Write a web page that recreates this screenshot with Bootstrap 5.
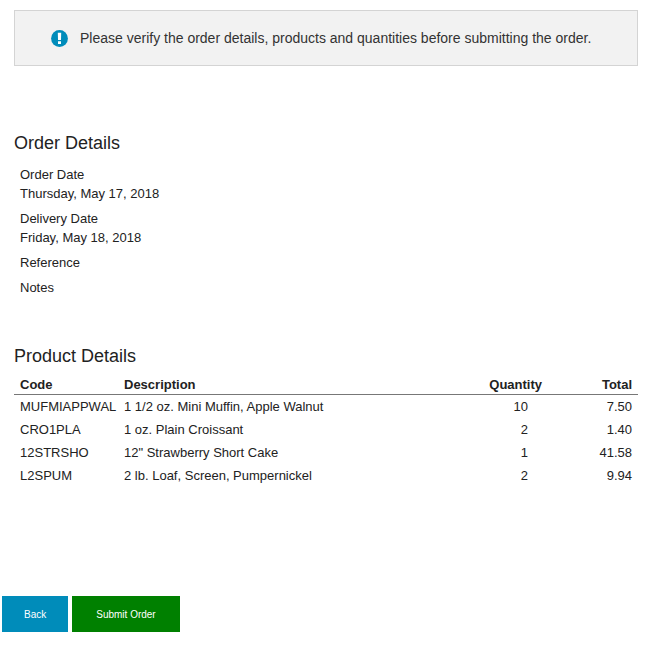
<!DOCTYPE html>
<html lang="en">
<head>
<meta charset="utf-8">
<meta name="viewport" content="width=device-width, initial-scale=1">
<title>Verify Order</title>
<link href="https://cdn.jsdelivr.net/npm/bootstrap@5.3.0/dist/css/bootstrap.min.css" rel="stylesheet">
<style>
body { font-family: "Liberation Sans", Arial, sans-serif; font-size: 13px; line-height: 19px; color: #222; background: #fff; }
.page-body { padding: 10px 9px 0 14px; }
.notice { background: #f2f2f2; border: 1px solid #d4d4d4; padding: 17px 36px; font-size: 14px; line-height: 20px; gap: 12px; color: #333; }
.notice svg { width: 17px; height: 17px; }
.section-title { font-size: 18px; line-height: 24px; color: #222; }
.order-section { margin-top: 65px; }
.product-section { margin-top: 47px; }
.order-facts { padding: 10px 6px 0; }
.order-facts > div { margin-bottom: 6px; }
.product-table { color: #222; line-height: 19px; margin-top: 5px; }
.product-table th, .product-table td { padding: 2px 6px; }
.product-table thead th { padding-bottom: 0; }
.product-table tr > :first-child { padding-right: 0; }
.product-table thead tr { border-bottom: 1px solid #777; }
.product-table .col-code { width: 104px; }
.product-table .col-qty { width: 100px; }
.product-table .col-total { width: 90px; }
.product-table td.qty-cell { padding-right: 20px; }
.actions { margin-top: 109px; padding: 0 2px; }
.action-btn { border: 0; border-radius: 0; height: 36px; padding: 0 22px; font-size: 10px; color: #fff; }
.back-btn, .back-btn:hover { background: #008cba; color: #fff; }
.submit-btn, .submit-btn:hover { background: #008000; color: #fff; padding: 0 24px; }
</style>
<script src="https://cdn.jsdelivr.net/npm/bootstrap@5.3.0/dist/js/bootstrap.bundle.min.js"></script>
</head>
<body>
<main class="page-body">
  <div class="notice d-flex align-items-center" role="alert">
    <svg class="flex-shrink-0" viewBox="0 0 17 17" aria-hidden="true"><circle cx="8.5" cy="8.5" r="8.4" fill="#008cba"/><path d="M6.8 2.8h3.4L10 10H7zM7 11.2h3v2.8H7z" fill="#fff"/></svg>
    <span>Please verify the order details, products and quantities before submitting the order.</span>
  </div>
  <section class="order-section">
    <h2 class="section-title m-0">Order Details</h2>
    <dl class="order-facts m-0">
      <div><dt class="fw-normal">Order Date</dt><dd class="m-0">Thursday, May 17, 2018</dd></div>
      <div><dt class="fw-normal">Delivery Date</dt><dd class="m-0">Friday, May 18, 2018</dd></div>
      <div><dt class="fw-normal">Reference</dt></div>
      <div><dt class="fw-normal">Notes</dt></div>
    </dl>
  </section>
  <section class="product-section">
    <h2 class="section-title m-0">Product Details</h2>
    <table class="product-table table-borderless w-100">
      <thead><tr><th class="col-code">Code</th><th>Description</th><th class="col-qty text-end">Quantity</th><th class="col-total text-end">Total</th></tr></thead>
      <tbody>
        <tr><td>MUFMIAPPWAL</td><td>1 1/2 oz. Mini Muffin, Apple Walnut</td><td class="qty-cell text-end">10</td><td class="text-end">7.50</td></tr>
        <tr><td>CRO1PLA</td><td>1 oz. Plain Croissant</td><td class="qty-cell text-end">2</td><td class="text-end">1.40</td></tr>
        <tr><td>12STRSHO</td><td>12" Strawberry Short Cake</td><td class="qty-cell text-end">1</td><td class="text-end">41.58</td></tr>
        <tr><td>L2SPUM</td><td>2 lb. Loaf, Screen, Pumpernickel</td><td class="qty-cell text-end">2</td><td class="text-end">9.94</td></tr>
      </tbody>
    </table>
  </section>
</main>
<div class="actions d-flex gap-1">
  <button type="button" class="btn action-btn back-btn">Back</button>
  <button type="submit" class="btn action-btn submit-btn">Submit Order</button>
</div>
</body>
</html>
